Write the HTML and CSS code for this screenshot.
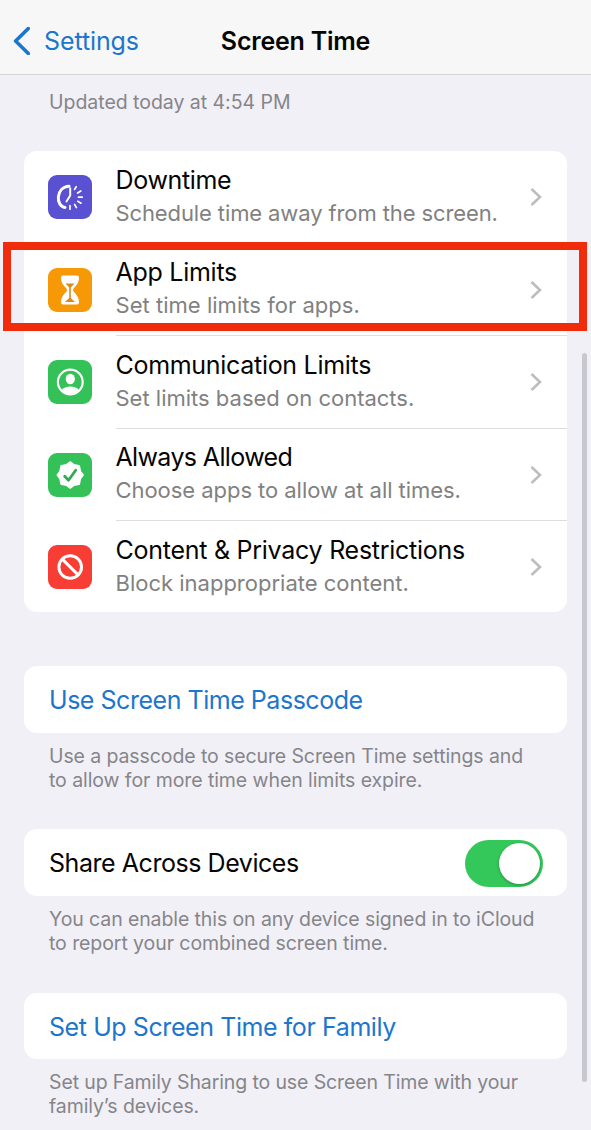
FILE: index.html
```html
<!DOCTYPE html>
<html lang="en">
<head>
<meta charset="utf-8">
<title>Screen Time</title>
<link rel="stylesheet" href="styles.css">
</head>
<body>
<div class="screen">
  <header class="navbar">
    <a class="back"><svg class="back-icon" width="18" height="28" viewBox="0 0 18 28"><path d="M16.3 1.5 L3.6 14 L16.3 26.5"/></svg><span>Settings</span></a>
    <h1 class="nav-title">Screen Time</h1>
  </header>
  <main class="content">
    <p class="updated">Updated today at 4:54 PM</p>
    <ul class="card menu">
      <li class="row">
        <svg class="tile indigo" viewBox="0 0 44 44"><path class="line thick" d="M21 11.2 C7.5 12 7.5 31.5 17 32.4"/><path class="line" d="M22.2 13.2 L22.2 20.5 L18.5 26.5"/><path class="line thin" d="M26.6 14.4 L28.2 11.7 M29.6 18 L32.8 16 M30.5 22.2 H34.2 M29.8 26.3 L33 28.2 M26.6 29.4 L28.4 32.6 M22 30.5 V34.2"/></svg>
        <div class="labels"><span class="title">Downtime</span><span class="sub s1">Schedule time away from the screen.</span></div>
        <svg class="chevron" viewBox="0 0 12 20"><path d="M1.5 2 L10 10 L1.5 18"/></svg>
      </li>
      <li class="row">
        <svg class="tile orange" viewBox="0 0 44 44"><path class="fill" d="M15 7.5 H29 Q31 7.5 31 9.5 C31 15 28 18 25.5 20.5 Q24.5 22 25.5 23.5 C28 26 31 29 31 34.5 Q31 36.5 29 36.5 H15 Q13 36.5 13 34.5 C13 29 16 26 18.5 23.5 Q19.5 22 18.5 20.5 C16 18 13 15 13 9.5 Q13 7.5 15 7.5 Z"/><path class="sand" d="M17.5 15.5 H26.5 L22.8 19.5 V30 L27 34 H17 L21.2 30 V19.5 Z"/></svg>
        <div class="labels"><span class="title t2">App Limits</span><span class="sub s2">Set time limits for apps.</span></div>
        <svg class="chevron" viewBox="0 0 12 20"><path d="M1.5 2 L10 10 L1.5 18"/></svg>
      </li>
      <li class="row">
        <svg class="tile green" viewBox="0 0 44 44"><circle class="ring" cx="22.3" cy="22" r="12.4"/><ellipse class="fill" cx="22.3" cy="19" rx="4.6" ry="5.2"/><path class="fill" d="M13.5 30.2 C16.5 25.3 28 25.3 31.2 30.2 C26.5 35.3 18 35.3 13.5 30.2 Z"/></svg>
        <div class="labels"><span class="title t3">Communication Limits</span><span class="sub s3">Set limits based on contacts.</span></div>
        <svg class="chevron" viewBox="0 0 12 20"><path d="M1.5 2 L10 10 L1.5 18"/></svg>
      </li>
      <li class="row">
        <svg class="tile green" viewBox="0 0 44 44"><path class="badge" d="M22.2 9.6 L25.8 12.3 L30.9 13.3 L31.9 18.4 L34.6 22 L31.9 25.6 L30.9 30.7 L25.8 31.7 L22.2 34.4 L18.6 31.7 L13.5 30.7 L12.5 25.6 L9.8 22 L12.5 18.4 L13.5 13.3 L18.6 12.3 Z"/><path class="tick" d="M16.7 23.2 L20.5 27.2 L27.7 17.2"/></svg>
        <div class="labels"><span class="title t4">Always Allowed</span><span class="sub s4">Choose apps to allow at all times.</span></div>
        <svg class="chevron" viewBox="0 0 12 20"><path d="M1.5 2 L10 10 L1.5 18"/></svg>
      </li>
      <li class="row">
        <svg class="tile red" viewBox="0 0 44 44"><circle class="ring bold" cx="22.2" cy="22" r="11.3"/><path class="line thick" d="M14.3 14.1 L30.1 29.9"/></svg>
        <div class="labels"><span class="title t5">Content &amp; Privacy Restrictions</span><span class="sub s5">Block inappropriate content.</span></div>
        <svg class="chevron" viewBox="0 0 12 20"><path d="M1.5 2 L10 10 L1.5 18"/></svg>
      </li>
    </ul>

    <section class="group">
      <div class="card single link l1">Use Screen Time Passcode</div>
      <p class="note"><span class="n1">Use a passcode to secure Screen Time settings and</span><br><span class="n2">to allow for more time when limits expire.</span></p>
    </section>
    <section class="group">
      <div class="card single share"><span>Share Across Devices</span><span class="switch"><span class="knob"></span></span></div>
      <p class="note"><span class="n3">You can enable this on any device signed in to iCloud</span><br><span class="n4">to report your combined screen time.</span></p>
    </section>
    <section class="group">
      <div class="card single link l2">Set Up Screen Time for Family</div>
      <p class="note"><span class="n5">Set up Family Sharing to use Screen Time with your</span><br><span class="n6">family’s devices.</span></p>
    </section>
  </main>
  <div class="highlight"></div>
  <div class="scrollbar"></div>
</div>
</body>
</html>
```
FILE: styles.css
```css
* { box-sizing: border-box; }
body { margin: 0; background: #f1f0f6; font-family: Inter, "Liberation Sans", sans-serif; color: #050505; }
.screen { position: relative; width: 591px; height: 1130px; overflow: hidden; }
.navbar { display: grid; grid-template-columns: 1fr auto 1fr; align-items: center; height: 75px; padding: 7px 12px 0; background: #f7f7f7; border-bottom: 1px solid #d3d3d6; }
.back { display: flex; align-items: center; gap: 14px; color: #1c76cd; font-size: 25px; letter-spacing: -0.1px; }
.back-icon { fill: none; stroke: #1c76cd; stroke-width: 3.6; stroke-linecap: round; stroke-linejoin: round; }
.nav-title { margin: 0; font-size: 25px; font-weight: 600; letter-spacing: -0.22px; }
.content { padding: 0 24px; }
.updated { margin: 0; padding: 14px 25px 0; height: 76px; font-size: 19.5px; line-height: 26px; letter-spacing: -0.03px; color: #85858a; }
.card { margin: 0; padding: 0; background: #fff; border-radius: 13px; }
.menu { list-style: none; height: 461px; display: grid; grid-template-rows: repeat(4, 92.5px) 91px; }
.row { display: flex; align-items: center; padding-left: 24px; }
.row:last-child { padding-top: 1.5px; }
.tile { width: 44px; height: 44px; border-radius: 9px; margin-right: 23.5px; flex: none; fill: none; stroke-linecap: round; stroke-linejoin: round; }
.indigo { background: #5a50d2; }
.orange { background: #f79807; }
.green { background: #34c157; }
.red { background: #f73d34; }
.fill { fill: #fff; }
.sand { fill: #dd8a1c; }
.line { stroke: #fff; stroke-width: 2; }
.thick { stroke-width: 3; }
.thin { stroke-width: 1.7; }
.ring { stroke: #fff; stroke-width: 2.2; }
.bold { stroke-width: 3; }
.badge { fill: #fff; stroke: #fff; stroke-width: 2.5; }
.tick { stroke: #34a853; stroke-width: 2.8; }
.labels { flex: 1; align-self: stretch; display: flex; flex-direction: column; justify-content: center; border-bottom: 1px solid #dedee0; }
.row:last-child .labels { border-bottom-color: transparent; }
.title { font-size: 25px; line-height: 33px; letter-spacing: -0.35px; white-space: nowrap; }
.t2 { letter-spacing: -0.27px; }
.t3 { letter-spacing: -0.3px; }
.t4 { letter-spacing: -0.63px; }
.t5 { letter-spacing: -0.26px; }
.sub { font-size: 22px; line-height: 33px; color: #818181; white-space: nowrap; }
.s1 { letter-spacing: -0.11px; }
.s2 { letter-spacing: 0.03px; }
.s4 { letter-spacing: -0.05px; }
.chevron { width: 12px; height: 20px; margin-left: -37px; margin-right: 25px; fill: none; stroke: #bdbdbf; stroke-width: 2.6; }
.group { height: 163.3px; }
.menu + .group { margin-top: 54px; }
.single { display: flex; align-items: center; height: 66.5px; padding: 2px 24px 0 25px; font-size: 25px; }
.link { color: #1c76cd; }
.l1 { letter-spacing: -0.47px; }
.l2 { letter-spacing: -0.42px; }
.share { justify-content: space-between; padding-top: 1px; letter-spacing: -0.45px; }
.switch { width: 78px; height: 47px; padding: 3px; border-radius: 24px; background: #34c759; display: flex; justify-content: flex-end; }
.knob { width: 41px; height: 41px; border-radius: 50%; background: #fff; box-shadow: 0 1px 3px rgba(0,0,0,.3); }
.note { margin: 0; padding: 11px 0 0 25px; font-size: 19.5px; line-height: 24.3px; color: #85858a; white-space: nowrap; }
.n1, .n3, .n6 { letter-spacing: -0.1px; }
.n2, .n4 { letter-spacing: -0.08px; }
.n5 { letter-spacing: -0.12px; }
.highlight { position: absolute; left: 3px; top: 242px; width: 584px; height: 89px; border: 8px solid #f12c0c; }
.scrollbar { position: absolute; left: 582px; top: 353px; width: 5px; height: 729px; border-radius: 3px; background: #c8c8d0; }
```
